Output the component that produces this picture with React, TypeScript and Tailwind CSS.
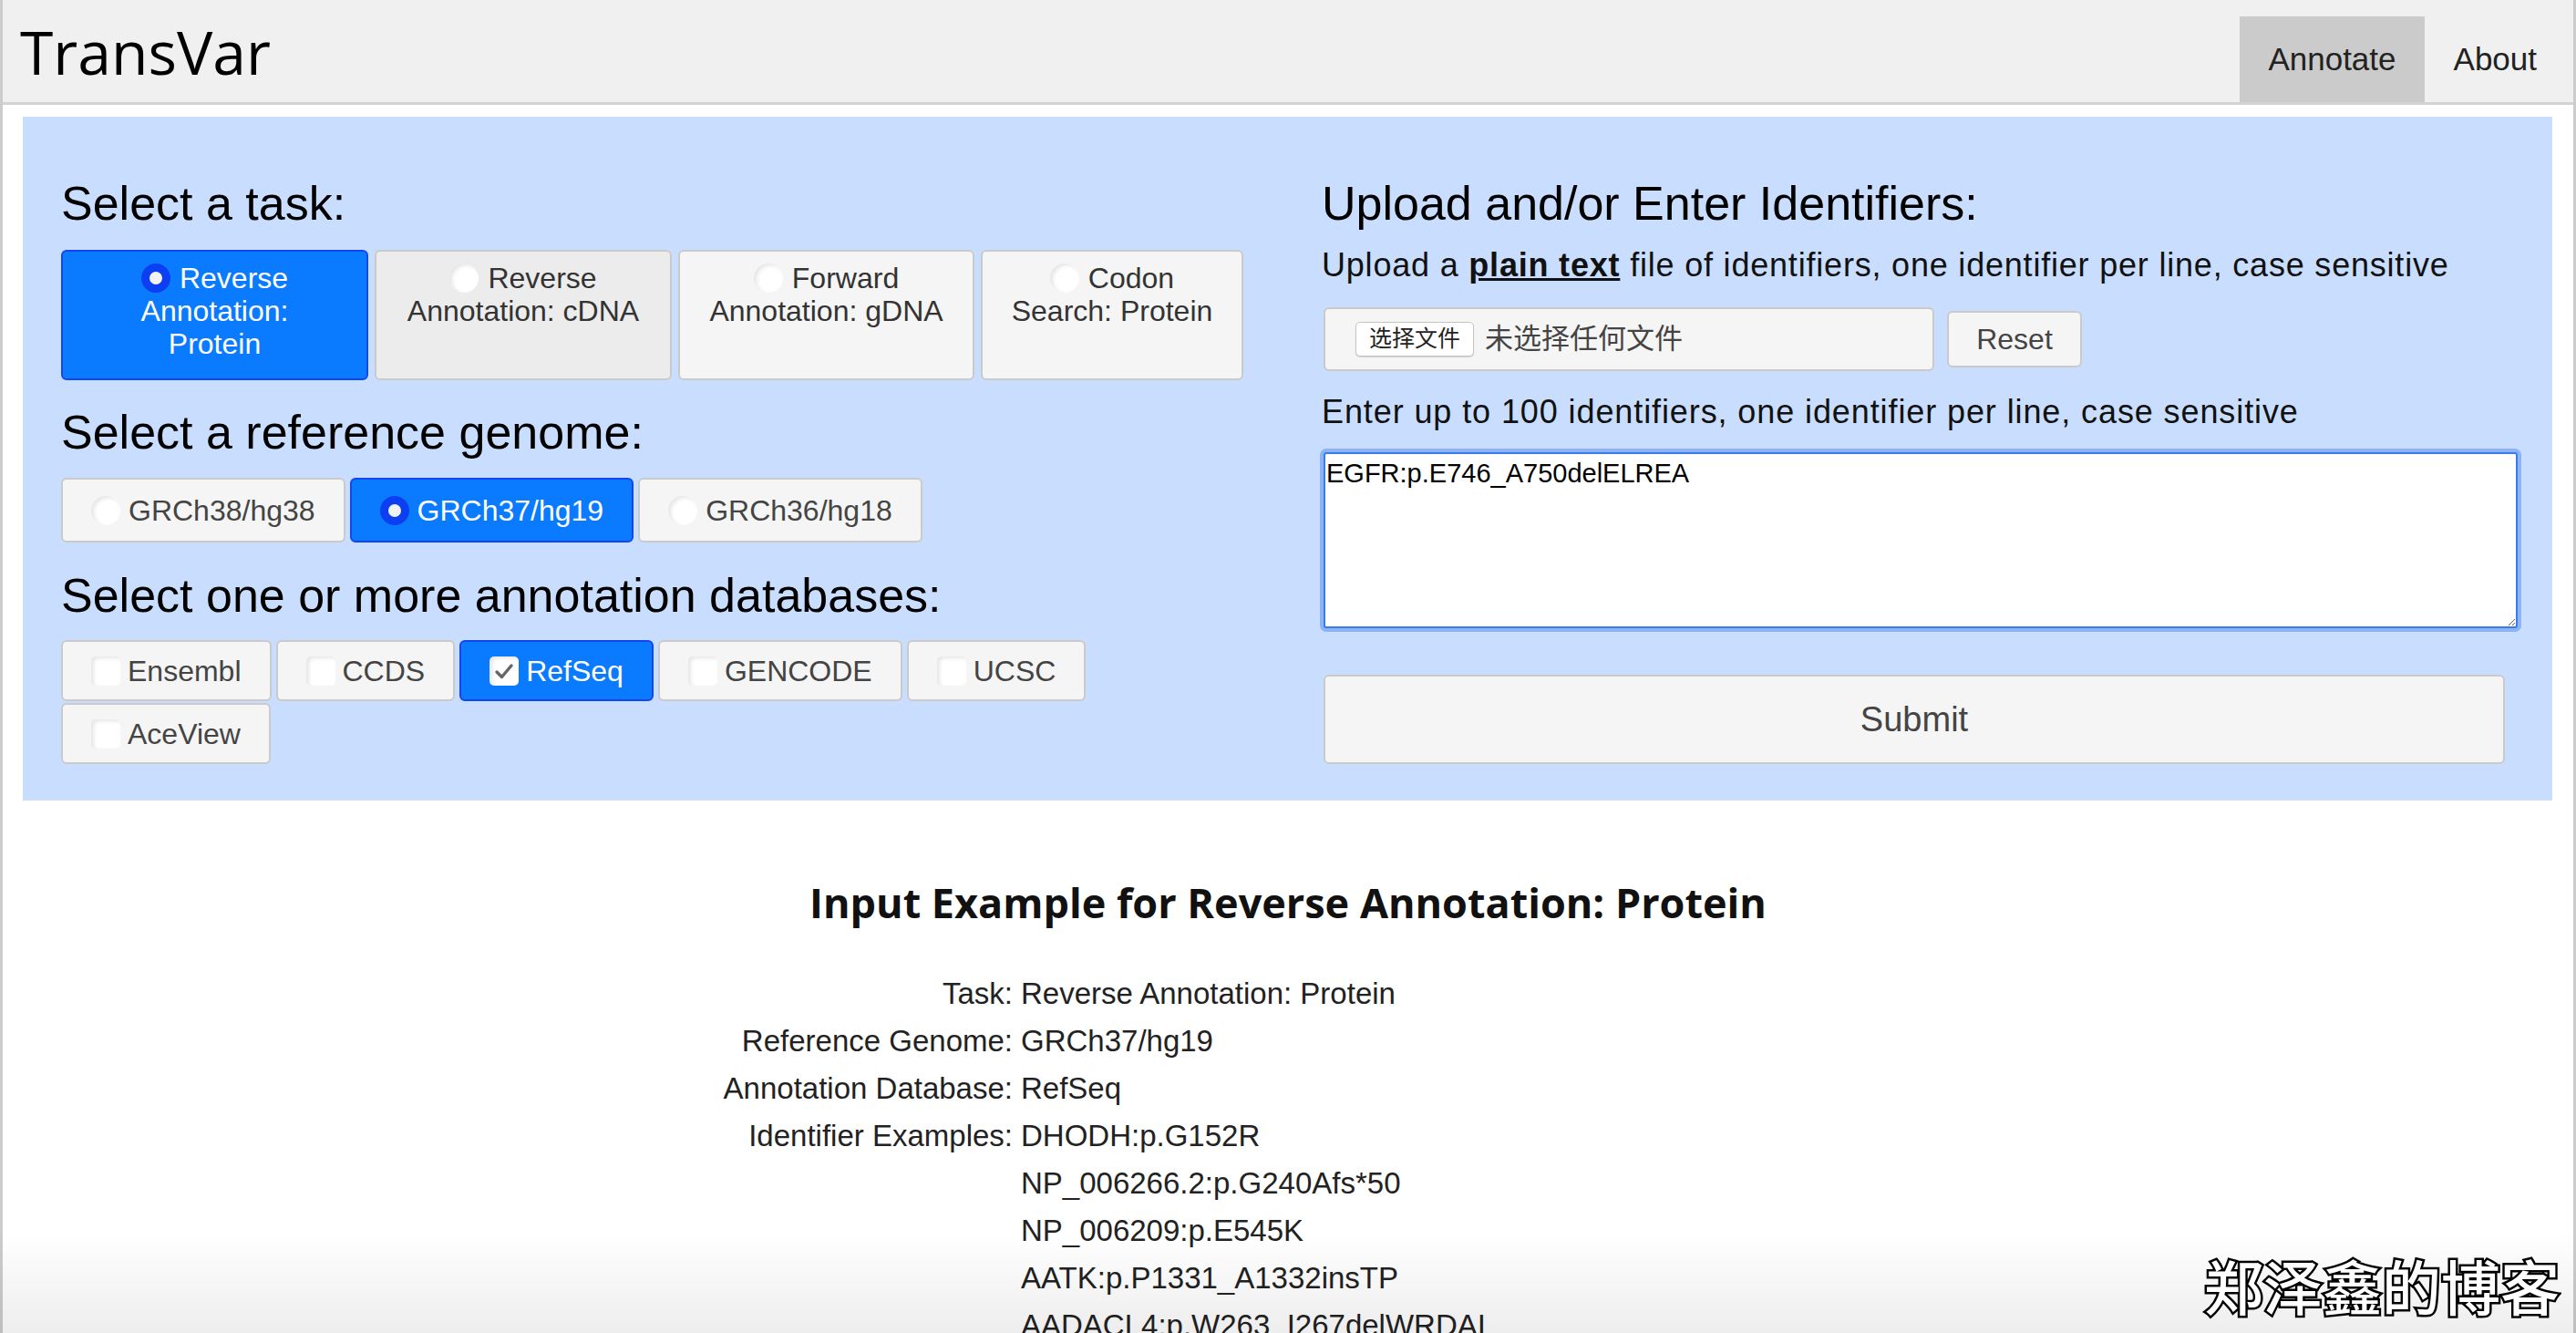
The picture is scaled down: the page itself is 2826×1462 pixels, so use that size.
const sans = "font-['Liberation_Sans',Arial,'Noto_Sans_CJK_SC',sans-serif]";

function Radio({ checked }: { checked?: boolean }) {
  if (checked) {
    return <span className="w-[32px] h-[32px] shrink-0 rounded-full bg-[#f2f2f2] border-[9px] border-[#0d3ff2]" />;
  }
  return (
    <span className="w-[32px] h-[32px] shrink-0 rounded-full bg-white shadow-[inset_3px_2px_4px_rgba(0,0,0,0.10)]" />
  );
}

function Checkbox({ checked }: { checked?: boolean }) {
  return (
    <span className="w-[32px] h-[32px] shrink-0 rounded-[5px] bg-white shadow-[inset_3px_2px_4px_rgba(0,0,0,0.10)] flex items-center justify-center">
      {checked && (
        <svg width="22" height="22" viewBox="0 0 22 22">
          <path d="M3 12 L8.5 17.5 L19 5" fill="none" stroke="#666" strokeWidth="3.4" strokeLinecap="round" strokeLinejoin="round" />
        </svg>
      )}
    </span>
  );
}

function Heading({ children }: { children: React.ReactNode }) {
  return <h2 className="text-[52px] leading-[60px] text-black">{children}</h2>;
}

const tasks = [
  { lines: ['Reverse', 'Annotation:', 'Protein'], w: 'w-[337px]', checked: true },
  { lines: ['Reverse', 'Annotation: cDNA'], w: 'w-[326px]', hover: true },
  { lines: ['Forward', 'Annotation: gDNA'], w: 'w-[325px]' },
  { lines: ['Codon', 'Search: Protein'], w: 'w-[288px]' },
];

const genomes = [
  { name: 'GRCh38/hg38' },
  { name: 'GRCh37/hg19', checked: true },
  { name: 'GRCh36/hg18' },
];

const dbs = [
  { name: 'Ensembl' },
  { name: 'CCDS' },
  { name: 'RefSeq', checked: true },
  { name: 'GENCODE' },
  { name: 'UCSC' },
  { name: 'AceView' },
];

const examples = [
  ['Task:', 'Reverse Annotation: Protein'],
  ['Reference Genome:', 'GRCh37/hg19'],
  ['Annotation Database:', 'RefSeq'],
  ['Identifier Examples:', 'DHODH:p.G152R'],
  ['', 'NP_006266.2:p.G240Afs*50'],
  ['', 'NP_006209:p.E545K'],
  ['', 'AATK:p.P1331_A1332insTP'],
  ['', 'AADACL4:p.W263_I267delWRDAI'],
];

export default function App() {
  return (
    <div className={`min-h-screen bg-white border-x-[3px] border-[#cccccc] ${sans}`}>
      {/* Top bar */}
      <header className="h-[115px] bg-[#f0f0f0] border-b-[3px] border-[#d3d3d3] flex items-stretch justify-between">
        <div className="pl-[19px] flex items-center font-['Open_Sans',sans-serif] text-[66px] text-black">TransVar</div>
        <nav className="pr-[8px] flex items-end text-[35px] text-[#222]">
          <a className="h-[94px] px-[31px] flex items-center bg-[#cbcbcb]">Annotate</a>
          <a className="h-[94px] px-[32px] flex items-center">About</a>
        </nav>
      </header>

      {/* Form panel */}
      <section className="mt-[13px] ml-[22px] mr-[23px] bg-[#c9deff] pt-[65px] pb-[40px] pl-[42px] pr-[28px] flex">
        {/* Left column */}
        <div className="w-[1383px] shrink-0">
          <Heading>Select a task:</Heading>
          <div className="mt-[21px] flex gap-[7px]">
            {tasks.map((t) => (
              <div
                key={t.lines.join()}
                className={`${t.w} h-[143px] rounded-[6px] border-2 pt-[11px] text-center text-[32px] leading-[36px] ${
                  t.checked
                    ? 'bg-[#0a7bff] border-[#1446f0] text-white'
                    : t.hover
                    ? 'bg-[#ececec] border-[#cacaca] text-[#333]'
                    : 'bg-[#f5f5f5] border-[#cacaca] text-[#333]'
                }`}
              >
                <div className="flex items-center justify-center gap-[10px]">
                  <Radio checked={t.checked} />
                  <span>{t.lines[0]}</span>
                </div>
                {t.lines.slice(1).map((l) => (
                  <div key={l}>{l}</div>
                ))}
              </div>
            ))}
          </div>

          <div className="mt-[27px]">
            <Heading>Select a reference genome:</Heading>
          </div>
          <div className="mt-[20px] flex gap-[5px]">
            {genomes.map((g) => (
              <div
                key={g.name}
                className={`h-[71px] px-[31px] rounded-[6px] border-2 flex items-center gap-[9px] text-[32px] ${
                  g.checked ? 'bg-[#0a7bff] border-[#1446f0] text-white' : 'bg-[#f5f5f5] border-[#cacaca] text-[#444]'
                }`}
              >
                <Radio checked={g.checked} />
                <span>{g.name}</span>
              </div>
            ))}
          </div>

          <div className="mt-[28px]">
            <Heading>Select one or more annotation databases:</Heading>
          </div>
          <div className="mt-[19px] w-[1300px] flex flex-wrap gap-x-[5px] gap-y-[2px]">
            {dbs.map((d) => (
              <div
                key={d.name}
                className={`h-[67px] px-[31px] rounded-[6px] border-2 flex items-center gap-[8px] text-[32px] ${
                  d.checked ? 'bg-[#0a7bff] border-[#1446f0] text-white' : 'bg-[#f5f5f5] border-[#cacaca] text-[#444]'
                }`}
              >
                <Checkbox checked={d.checked} />
                <span>{d.name}</span>
              </div>
            ))}
          </div>
        </div>

        {/* Right column */}
        <div className="flex-1 min-w-0">
          <Heading>Upload and/or Enter Identifiers:</Heading>
          <p className="mt-[19px] text-[36px] tracking-[0.8px] leading-[38px] text-[#111]">
            Upload a <b className="underline">plain text</b> file of identifiers, one identifier per line, case sensitive
          </p>
          <div className="mt-[27px] ml-[2px] flex items-center gap-[14px]">
            <div className="w-[670px] h-[70px] rounded-[6px] border-2 border-[#cacaca] bg-[#f5f5f5] pl-[33px] flex items-center gap-[12px]">
              <span className="h-[38px] px-[14px] flex items-center rounded-[5px] border border-[#c4c4c4] bg-white text-[25px] text-[#222] shadow-[0_1px_1px_rgba(0,0,0,0.15)]">
                选择文件
              </span>
              <span className="text-[31px] text-[#444]">未选择任何文件</span>
            </div>
            <div className="w-[148px] h-[62px] rounded-[6px] border-2 border-[#cacaca] bg-[#f5f5f5] flex items-center justify-center text-[32px] text-[#444]">
              Reset
            </div>
          </div>
          <p className="mt-[26px] text-[36px] tracking-[0.9px] leading-[38px] text-[#111]">
            Enter up to 100 identifiers, one identifier per line, case sensitive
          </p>
          <textarea
            className="mt-[25px] ml-[2px] block w-[1310px] h-[193px] rounded-[3px] border-2 border-[#3a7be6] shadow-[0_0_0_4px_#8cb4f5] bg-white px-[1px] pt-[5px] text-[29px] leading-[33px] text-black outline-none"
            defaultValue="EGFR:p.E746_A750delELREA"
          />
          <div className="mt-[51px] ml-[2px] w-[1296px] h-[98px] rounded-[6px] border-2 border-[#cacaca] bg-[#f5f5f5] flex items-center justify-center text-[38px] text-[#444]">
            Submit
          </div>
        </div>
      </section>

      {/* Example */}
      <h1 className="mt-[82px] text-center font-['Open_Sans',sans-serif] font-bold text-[45px] leading-[60px] text-[#111]">
        Input Example for Reverse Annotation: Protein
      </h1>
      <div className="mt-[44px] grid grid-cols-[1108px_1fr] text-[33px] leading-[52px] text-[#222]">
        {examples.map(([k, v], i) => (
          <div key={i} className="contents">
            <div className="text-right">{k}</div>
            <div className="pl-[9px]">{v}</div>
          </div>
        ))}
      </div>

      {/* screenshot shade + watermark */}
      <div className="fixed inset-x-0 bottom-0 h-[110px] pointer-events-none bg-linear-to-b from-transparent to-black/[0.07]" />
      <div className="fixed right-[18px] bottom-[20px] pointer-events-none font-['Noto_Sans_CJK_SC',sans-serif] font-medium text-[65px] leading-none text-white [-webkit-text-stroke:5px_#000] [paint-order:stroke_fill]">
        郑泽鑫的博客
      </div>
    </div>
  );
}
